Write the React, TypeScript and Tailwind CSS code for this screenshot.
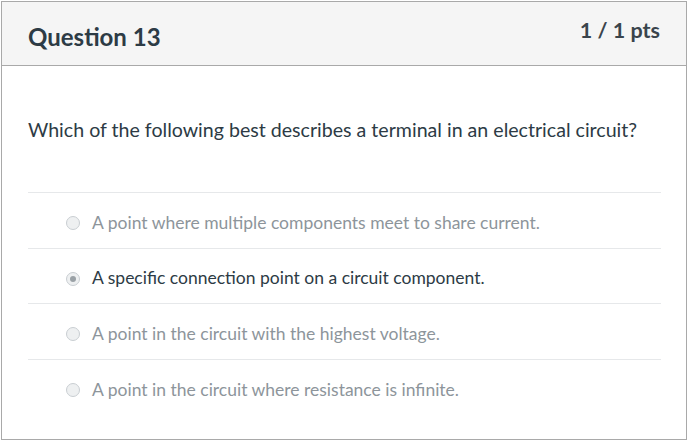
const options = [
  { text: 'A point where multiple components meet to share current.', selected: false },
  { text: 'A specific connection point on a circuit component.', selected: true },
  { text: 'A point in the circuit with the highest voltage.', selected: false },
  { text: 'A point in the circuit where resistance is infinite.', selected: false },
]

const Radio = ({ checked }: { checked: boolean }) => (
  <span className="w-[14px] h-[14px] rounded-full border border-[#c9ced2] bg-[#eef0f1] flex items-center justify-center shrink-0">
    {checked && <span className="w-[6px] h-[6px] rounded-full bg-[#9aa1a6]" />}
  </span>
)

export default function App() {
  return (
    <div className="w-[689px] h-[440px] bg-white pl-[1px] pt-[1px] font-['Lato','Liberation_Sans',sans-serif]">
      <div className="w-[686px] h-[439px] border border-[#a9a9a9] flex flex-col">
        {/* Header */}
        <div className="h-[64px] bg-[#f5f5f5] border-b border-[#a9a9a9] px-[26px] flex justify-between shrink-0">
          <h2 className="text-[24px] font-bold text-[#2d3b45] mt-[19px] leading-[32px]">Question 13</h2>
          <span className="text-[21.5px] font-bold text-[#3a444c] mt-[13px] leading-[30px]">1 / 1 pts</span>
        </div>

        {/* Body */}
        <div className="pt-[50px] px-[26px]">
          <p className="text-[19.6px] leading-[28px] text-[#2d3b45]">
            Which of the following best describes a terminal in an electrical circuit?
          </p>
          <div className="mt-[48px] mr-[-1px]">
            {options.map(o => (
              <div
                key={o.text}
                className="h-[55.7px] border-t border-[#e6e8ea] flex items-center pt-[5px] pl-[38px] gap-[12px]"
              >
                <Radio checked={o.selected} />
                <span className={`text-[17.5px] ${o.selected ? 'text-[#2d3b45]' : 'text-[#8d959b]'}`}>{o.text}</span>
              </div>
            ))}
          </div>
        </div>
      </div>
    </div>
  )
}
